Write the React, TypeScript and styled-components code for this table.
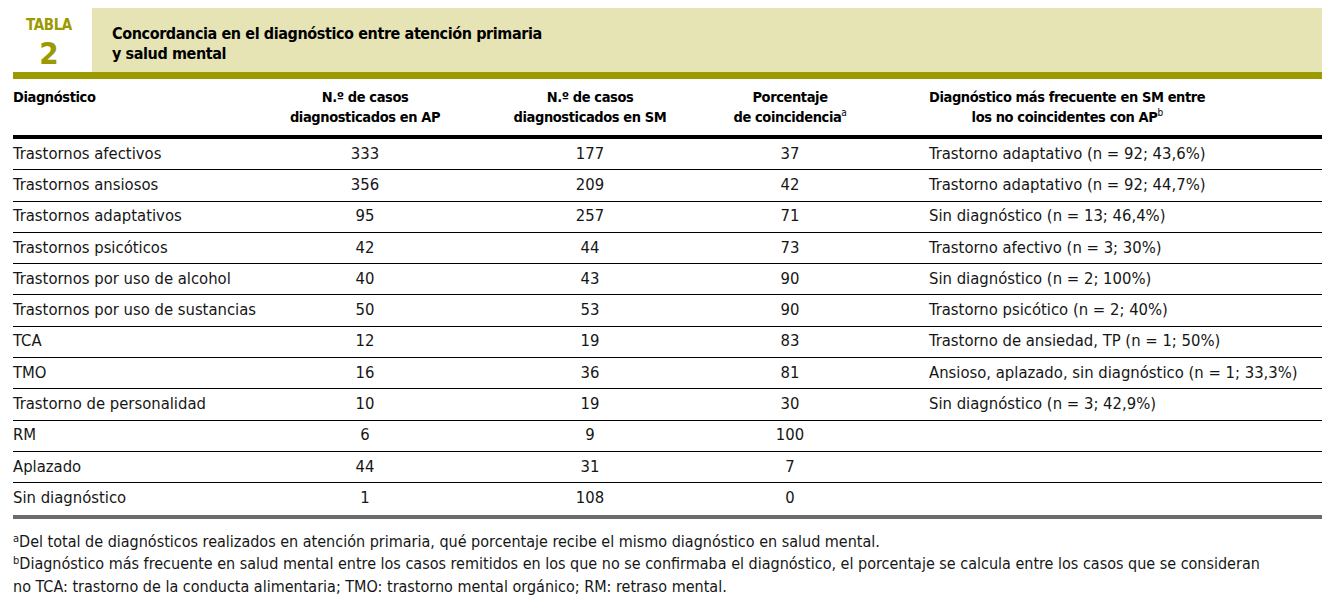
import React from "react"
import styled, { createGlobalStyle } from "styled-components"

type Row = {
    diagnosis: string;
    ap: string;
    sm: string;
    pct: string;
    frequent: string;
}

const rows: Row[] = [
    { diagnosis: "Trastornos afectivos", ap: "333", sm: "177", pct: "37", frequent: "Trastorno adaptativo (n = 92; 43,6%)" },
    { diagnosis: "Trastornos ansiosos", ap: "356", sm: "209", pct: "42", frequent: "Trastorno adaptativo (n = 92; 44,7%)" },
    { diagnosis: "Trastornos adaptativos", ap: "95", sm: "257", pct: "71", frequent: "Sin diagnóstico (n = 13; 46,4%)" },
    { diagnosis: "Trastornos psicóticos", ap: "42", sm: "44", pct: "73", frequent: "Trastorno afectivo (n = 3; 30%)" },
    { diagnosis: "Trastornos por uso de alcohol", ap: "40", sm: "43", pct: "90", frequent: "Sin diagnóstico (n = 2; 100%)" },
    { diagnosis: "Trastornos por uso de sustancias", ap: "50", sm: "53", pct: "90", frequent: "Trastorno psicótico (n = 2; 40%)" },
    { diagnosis: "TCA", ap: "12", sm: "19", pct: "83", frequent: "Trastorno de ansiedad, TP (n = 1; 50%)" },
    { diagnosis: "TMO", ap: "16", sm: "36", pct: "81", frequent: "Ansioso, aplazado, sin diagnóstico (n = 1; 33,3%)" },
    { diagnosis: "Trastorno de personalidad", ap: "10", sm: "19", pct: "30", frequent: "Sin diagnóstico (n = 3; 42,9%)" },
    { diagnosis: "RM", ap: "6", sm: "9", pct: "100", frequent: "" },
    { diagnosis: "Aplazado", ap: "44", sm: "31", pct: "7", frequent: "" },
    { diagnosis: "Sin diagnóstico", ap: "1", sm: "108", pct: "0", frequent: "" },
]

const GlobalStyle = createGlobalStyle`
    html, body {
        margin: 0;
        padding: 0;
        background: #ffffff;
    }
    body {
        font-family: "Liberation Sans Narrow", "DejaVu Sans Condensed", "Liberation Sans", sans-serif;
        color: #161616;
    }
`

const OLIVE = "#9b9a00"

const StyledPage = styled.div`
    width: 1309px;
    padding: 8px 10px 0 13px;
`

const StyledTitleBar = styled.div`
    display: grid;
    grid-template-columns: 79px 1fr;
    height: 64px;
`

const StyledLabel = styled.div`
    display: flex;
    flex-direction: column;
    align-items: center;
    color: ${OLIVE};
    font-weight: bold;
    padding-top: 10px;
    padding-right: 7px;
`

const StyledLabelWord = styled.span`
    font-size: 15px;
    line-height: 14px;
    letter-spacing: -0.4px;
`

const StyledLabelNumber = styled.span`
    margin-top: 7px;
    font-size: 31px;
    line-height: 28px;
`

const StyledTitleBox = styled.div`
    background: #e6e4b5;
    padding: 16px 0 0 20px;
`

const StyledTitle = styled.h1`
    margin: 0;
    font-size: 16px;
    line-height: 20px;
    letter-spacing: -0.4px;
    font-weight: bold;
    color: #000000;
`

const StyledRule = styled.div<{ $height: number; $color: string }>`
    height: ${({ $height }) => $height}px;
    background: ${({ $color }) => $color};
`

const StyledHeadRow = styled.div`
    display: grid;
    grid-template-columns: 242px 220px 230px 170px 1fr;
    height: 56px;
    box-sizing: border-box;
    padding-top: 8px;
    font-weight: bold;
    font-size: 14.5px;
    letter-spacing: -0.4px;
    line-height: 20px;
    color: #000000;
`

const StyledHeadCell = styled.div<{ $align?: string }>`
    text-align: ${({ $align }) => $align || "center"};
`

const StyledHeadWide = styled.div`
    padding-left: 54px;
`

const StyledHeadInline = styled.div`
    display: inline-block;
    text-align: center;
`

const StyledBodyRow = styled.div<{ $last?: boolean }>`
    display: grid;
    grid-template-columns: 242px 220px 230px 170px 1fr;
    align-items: center;
    height: 31.3px;
    box-sizing: border-box;
    border-bottom: ${({ $last }) => ($last ? "none" : "1px solid #000")};
    font-size: 16.5px;
`

const StyledCell = styled.div<{ $align?: string }>`
    text-align: ${({ $align }) => $align || "center"};
    white-space: nowrap;
    padding-bottom: 2px;
`

const StyledWideCell = styled(StyledCell)`
    padding-left: 54px;
`

const StyledNotes = styled.div`
    padding-top: 13px;
    font-size: 16px;
    line-height: 20.5px;
`

const StyledNote = styled.p`
    margin: 0;
    white-space: nowrap;
`

const StyledSup = styled.span`
    position: relative;
    top: -5px;
    font-size: 11px;
`

const StyledHeadSup = styled.span`
    position: relative;
    top: -6px;
    font-size: 10px;
    font-weight: normal;
`

const App: React.FC = () => {
    return (
        <>
            <GlobalStyle />
            <StyledPage>
                <StyledTitleBar>
                    <StyledLabel>
                        <StyledLabelWord>TABLA</StyledLabelWord>
                        <StyledLabelNumber>2</StyledLabelNumber>
                    </StyledLabel>
                    <StyledTitleBox>
                        <StyledTitle>
                            Concordancia en el diagnóstico entre atención primaria<br />y salud mental
                        </StyledTitle>
                    </StyledTitleBox>
                </StyledTitleBar>
                <StyledRule $height={7} $color={OLIVE} />
                <StyledHeadRow>
                    <StyledHeadCell $align="left">Diagnóstico</StyledHeadCell>
                    <StyledHeadCell>N.º de casos<br />diagnosticados en AP</StyledHeadCell>
                    <StyledHeadCell>N.º de casos<br />diagnosticados en SM</StyledHeadCell>
                    <StyledHeadCell>Porcentaje<br />de coincidencia<StyledHeadSup>a</StyledHeadSup></StyledHeadCell>
                    <StyledHeadWide>
                        <StyledHeadInline>
                            Diagnóstico más frecuente en SM entre<br />los no coincidentes con AP<StyledHeadSup>b</StyledHeadSup>
                        </StyledHeadInline>
                    </StyledHeadWide>
                </StyledHeadRow>
                <StyledRule $height={4} $color="#000000" />
                {rows.map((row, index) => (
                    <StyledBodyRow key={row.diagnosis} $last={index === rows.length - 1}>
                        <StyledCell $align="left">{row.diagnosis}</StyledCell>
                        <StyledCell>{row.ap}</StyledCell>
                        <StyledCell>{row.sm}</StyledCell>
                        <StyledCell>{row.pct}</StyledCell>
                        <StyledWideCell $align="left">{row.frequent}</StyledWideCell>
                    </StyledBodyRow>
                ))}
                <StyledRule $height={4} $color="#6b6b6b" />
                <StyledNotes>
                    <StyledNote>
                        <StyledSup>a</StyledSup>Del total de diagnósticos realizados en atención primaria, qué porcentaje recibe el mismo diagnóstico en salud mental.
                    </StyledNote>
                    <StyledNote>
                        <StyledSup>b</StyledSup>Diagnóstico más frecuente en salud mental entre los casos remitidos en los que no se confirmaba el diagnóstico, el porcentaje se calcula entre los casos que se consideran
                    </StyledNote>
                    <StyledNote>
                        no TCA: trastorno de la conducta alimentaria; TMO: trastorno mental orgánico; RM: retraso mental.
                    </StyledNote>
                </StyledNotes>
            </StyledPage>
        </>
    )
}

export default App
